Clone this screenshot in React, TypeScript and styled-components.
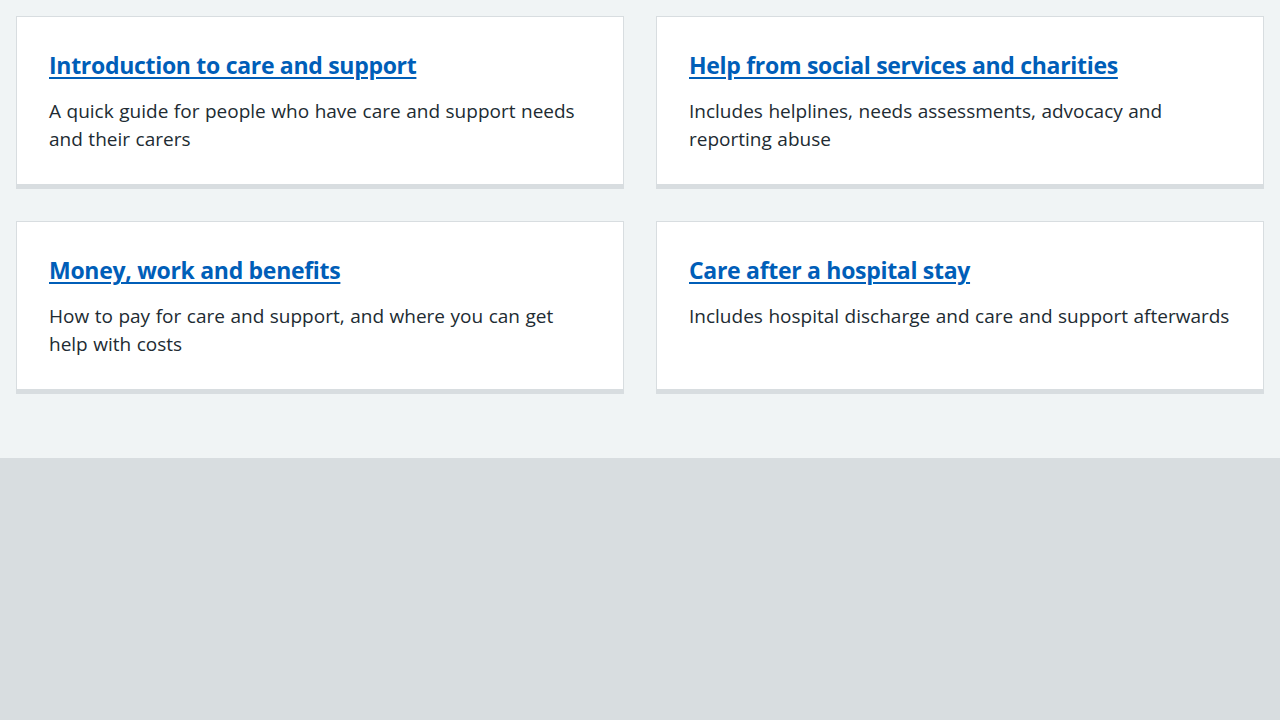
import React from 'react';
import styled, { createGlobalStyle } from 'styled-components';

const GlobalStyle = createGlobalStyle`
  html, body {
    margin: 0;
    padding: 0;
    background-color: #d8dde0;
  }
  body {
    font-family: 'Open Sans', 'Noto Sans', Arial, sans-serif;
    color: #212b32;
    -webkit-font-smoothing: antialiased;
  }
`;

const Main = styled.main`
  background-color: #f0f4f5;
  padding: 16px 16px 68px;
`;

const CardGrid = styled.ul`
  list-style: none;
  margin: 0;
  padding: 0;
  display: grid;
  grid-template-columns: 1fr 1fr;
  column-gap: 32px;
  row-gap: 36px;
`;

const Card = styled.li`
  background-color: #fff;
  border: 1px solid #d8dde0;
  box-shadow: 0 4px 0 #d8dde0;
  padding: 32px 32px 31px;
  min-height: 167px;
  box-sizing: border-box;
`;

const Heading = styled.h2`
  margin: 0 0 16px;
  font-size: 23px;
  line-height: 32px;
  font-weight: 700;
  letter-spacing: -0.3px;
`;

const HeadingLink = styled.a`
  color: #005eb8;
  text-decoration: underline;
  text-decoration-thickness: 2px;
  text-underline-offset: 3px;
`;

const Description = styled.p`
  margin: 0;
  font-size: 19px;
  line-height: 28px;
  word-spacing: 0.6px;
  color: #212b32;
`;

interface CardItem {
  title: string;
  description: string;
}

const cards: CardItem[] = [
  {
    title: 'Introduction to care and support',
    description: 'A quick guide for people who have care and support needs and their carers',
  },
  {
    title: 'Help from social services and charities',
    description: 'Includes helplines, needs assessments, advocacy and reporting abuse',
  },
  {
    title: 'Money, work and benefits',
    description: 'How to pay for care and support, and where you can get help with costs',
  },
  {
    title: 'Care after a hospital stay',
    description: 'Includes hospital discharge and care and support afterwards',
  },
];

export default function App() {
  return (
    <>
      <GlobalStyle />
      <Main>
        <CardGrid>
          {cards.map((card) => (
            <Card key={card.title}>
              <Heading>
                <HeadingLink href="#">{card.title}</HeadingLink>
              </Heading>
              <Description>{card.description}</Description>
            </Card>
          ))}
        </CardGrid>
      </Main>
    </>
  );
}
